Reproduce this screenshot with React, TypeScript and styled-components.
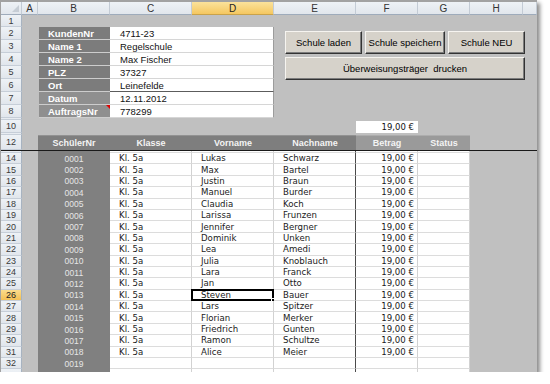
import React from "react";
import styled, { createGlobalStyle, css } from "styled-components";

const GlobalStyle = createGlobalStyle`
  *, *::before, *::after { box-sizing: border-box; }
  html, body { margin: 0; padding: 0; background: #fff; }
  body { font-family: "Liberation Sans", Arial, sans-serif; }
`;

// rownum, A..H, rest
const COLS = "21px 16px 72px 82px 82px 82px 62px 52px 53px 1fr";
const DATA_FONT = `"DejaVu Sans", Verdana, sans-serif`;

const Sheet = styled.div`
  position: relative;
  width: 537px;
  height: 372px;
  overflow: hidden;
  background: #c0c0c0;
  border-top: 2px solid #a2a2a2;
  border-left: 1px solid #a2a2a2;
  box-shadow: 3px 3px 4px rgba(0, 0, 0, 0.45);
`;

const Row = styled.div<{ $h: number; $freeze?: boolean }>`
  display: grid;
  grid-template-columns: ${COLS};
  height: ${(p) => p.$h}px;
  ${(p) =>
    p.$freeze &&
    css`
      border-top: 1px solid #1a1a1a;
    `}
`;

const HeadBase = css`
  background: linear-gradient(#eef2f6, #e1e6ec);
  color: #333;
  display: flex;
  align-items: center;
  justify-content: center;
  overflow: hidden;
`;

const ColHead = styled.div<{ $sel?: boolean }>`
  ${HeadBase}
  font-size: 10px;
  border-right: 1px solid #c3cbd5;
  border-bottom: 1px solid #9eabbb;
  ${(p) =>
    p.$sel &&
    css`
      background: linear-gradient(#fbe29b, #f5c760);
      color: #222;
      border-bottom-color: #c9a24a;
    `}
`;

const Corner = styled.div`
  ${HeadBase}
  position: relative;
  border-right: 1px solid #c3cbd5;
  border-bottom: 1px solid #9eabbb;
  &::after {
    content: "";
    position: absolute;
    right: 2px;
    bottom: 2px;
    border-left: 7px solid transparent;
    border-bottom: 7px solid #c6cdd5;
  }
`;

const RowNum = styled.div<{ $sel?: boolean }>`
  ${HeadBase}
  font-size: 9px;
  color: #3a3a3a;
  border-right: 1px solid #a7b3c1;
  border-bottom: 1px solid #c6ced8;
  ${(p) =>
    p.$sel &&
    css`
      background: linear-gradient(#fadc8c, #f3c055);
      color: #222;
    `}
`;

const Gray = styled.div``;

const Label = styled.div<{ $light?: boolean; $comment?: boolean }>`
  position: relative;
  margin-left: 1px;
  background: ${(p) => (p.$light ? "#8f8f8f" : "#7c7c7c")};
  border-bottom: 1px solid #cdcdcd;
  color: #fff;
  font-weight: bold;
  font-size: 9.5px;
  display: flex;
  align-items: center;
  padding-left: 9px;
  ${(p) =>
    p.$comment &&
    css`
      &::after {
        content: "";
        position: absolute;
        top: 0;
        right: 0;
        border-left: 4px solid transparent;
        border-top: 4px solid #e00000;
      }
    `}
`;

const Value = styled.div<{ $strong?: boolean }>`
  grid-column: span 2;
  background: #fff;
  border-bottom: 1px solid ${(p) => (p.$strong ? "#5c5c5c" : "#d6d6d6")};
  border-right: 1px solid #9c9c9c;
  font-size: 9.5px;
  color: #111;
  display: flex;
  align-items: center;
  padding-left: 10px;
`;

const TotalCell = styled.div`
  background: #fff;
  font-family: ${DATA_FONT};
  font-size: 8.5px;
  color: #111;
  display: flex;
  align-items: center;
  justify-content: flex-end;
  padding-right: 4px;
  margin-top: 1px;
`;

const Head = styled.div<{ $light?: boolean }>`
  background: ${(p) => (p.$light ? "#9a9a9a" : "#7e7e7e")};
  border-top: 1px solid ${(p) => (p.$light ? "#adadad" : "#929292")};
  color: #f4f4f4;
  font-weight: bold;
  font-size: 9px;
  display: flex;
  align-items: center;
  justify-content: center;
`;

const NrCell = styled.div`
  background: #808080;
  color: #e6e6e6;
  font-size: 8.5px;
  display: flex;
  align-items: center;
  justify-content: center;
`;

const DataCell = styled.div<{ $right?: boolean; $sep?: boolean; $sel?: boolean }>`
  position: relative;
  background: #fff;
  border-bottom: 1px solid #dcdcdc;
  border-right: 1px solid ${(p) => (p.$sep ? "#4a4a4a" : "#d2d2d2")};
  font-family: ${DATA_FONT};
  font-size: 8.6px;
  color: #1a1a1a;
  display: flex;
  align-items: center;
  justify-content: ${(p) => (p.$right ? "flex-end" : "flex-start")};
  padding: ${(p) => (p.$right ? "0 3px 0 0" : "0 0 0 9px")};
  white-space: nowrap;
  ${(p) =>
    p.$sel &&
    css`
      &::before {
        content: "";
        position: absolute;
        inset: -1px -1px -1px -1px;
        border: 2px solid #000;
      }
      &::after {
        content: "";
        position: absolute;
        right: -3px;
        bottom: -3px;
        width: 5px;
        height: 5px;
        background: #000;
        border: 1px solid #fff;
      }
    `}
`;

const ButtonPanel = styled.div`
  position: absolute;
  left: 284px;
  top: 29px;
  display: grid;
  grid-template-columns: 77px 80px 77px;
  grid-auto-rows: 23px;
  gap: 3px;
`;

const Btn = styled.button<{ $wide?: boolean }>`
  ${(p) => p.$wide && "grid-column: 1 / -1;"}
  background: #d6d2ca;
  border: 1px solid;
  border-color: #f6f4f0 #333 #333 #f6f4f0;
  box-shadow: inset -1px -1px 0 #7c7c7c;
  font-family: "Liberation Sans", Arial, sans-serif;
  font-size: 9.5px;
  color: #000;
  padding: 0;
  white-space: pre;
`;

const top = [
  { row: 2, label: "KundenNr", value: "4711-23" },
  { row: 3, label: "Name 1", value: "Regelschule" },
  { row: 4, label: "Name 2", value: "Max Fischer" },
  { row: 5, label: "PLZ", value: "37327" },
  { row: 6, label: "Ort", value: "Leinefelde", strong: true },
  { row: 7, label: "Datum", value: "12.11.2012", light: true },
  { row: 8, label: "AuftragsNr", value: "778299", light: true, comment: true },
];

const pupils = [
  ["Lukas", "Schwarz"],
  ["Max", "Bartel"],
  ["Justin", "Braun"],
  ["Manuel", "Burder"],
  ["Claudia", "Koch"],
  ["Larissa", "Frunzen"],
  ["Jennifer", "Bergner"],
  ["Dominik", "Unken"],
  ["Lea", "Amedi"],
  ["Julia", "Knoblauch"],
  ["Lara", "Franck"],
  ["Jan", "Otto"],
  ["Steven", "Bauer"],
  ["Lars", "Spitzer"],
  ["Florian", "Merker"],
  ["Friedrich", "Gunten"],
  ["Ramon", "Schultze"],
  ["Alice", "Meier"],
  null,
  null,
];

export default function App() {
  return (
    <>
      <GlobalStyle />
      <Sheet>
        <Row $h={13}>
          <Corner />
          {["A", "B", "C", "D", "E", "F", "G", "H", ""].map((c) => (
            <ColHead key={c} $sel={c === "D"}>
              {c}
            </ColHead>
          ))}
        </Row>

        <Row $h={12}>
          <RowNum>1</RowNum>
        </Row>

        {top.map((t) => (
          <Row $h={13} key={t.row}>
            <RowNum>{t.row}</RowNum>
            <Gray />
            <Label $light={t.light} $comment={t.comment}>
              {t.label}
            </Label>
            <Value $strong={t.strong}>{t.value}</Value>
          </Row>
        ))}

        <Row $h={2}>
          <RowNum />
        </Row>
        <Row $h={13}>
          <RowNum>10</RowNum>
          <Gray />
          <Gray />
          <Gray />
          <Gray />
          <Gray />
          <TotalCell>19,00 €</TotalCell>
        </Row>
        <Row $h={2}>
          <RowNum />
        </Row>
        <Row $h={15}>
          <RowNum>12</RowNum>
          <Gray />
          <Head>SchülerNr</Head>
          <Head>Klasse</Head>
          <Head>Vorname</Head>
          <Head>Nachname</Head>
          <Head $light>Betrag</Head>
          <Head $light>Status</Head>
        </Row>
        <Row $h={3} $freeze>
          <RowNum />
          <Gray />
          <NrCell />
          <DataCell />
          <DataCell />
          <DataCell $sep />
          <DataCell />
          <DataCell />
        </Row>

        {pupils.map((p, i) => {
          const row = 14 + i;
          const sel = row === 26;
          return (
            <Row $h={11.4} key={row}>
              <RowNum $sel={sel}>{row}</RowNum>
              <Gray />
              <NrCell>{String(i + 1).padStart(4, "0")}</NrCell>
              <DataCell>{p ? "Kl. 5a" : ""}</DataCell>
              <DataCell $sel={sel}>{p ? p[0] : ""}</DataCell>
              <DataCell $sep>{p ? p[1] : ""}</DataCell>
              <DataCell $right>{p ? "19,00 €" : ""}</DataCell>
              <DataCell />
            </Row>
          );
        })}

        <ButtonPanel>
          <Btn>Schule laden</Btn>
          <Btn>Schule speichern</Btn>
          <Btn>Schule NEU</Btn>
          <Btn $wide>Überweisungsträger  drucken</Btn>
        </ButtonPanel>
      </Sheet>
    </>
  );
}
